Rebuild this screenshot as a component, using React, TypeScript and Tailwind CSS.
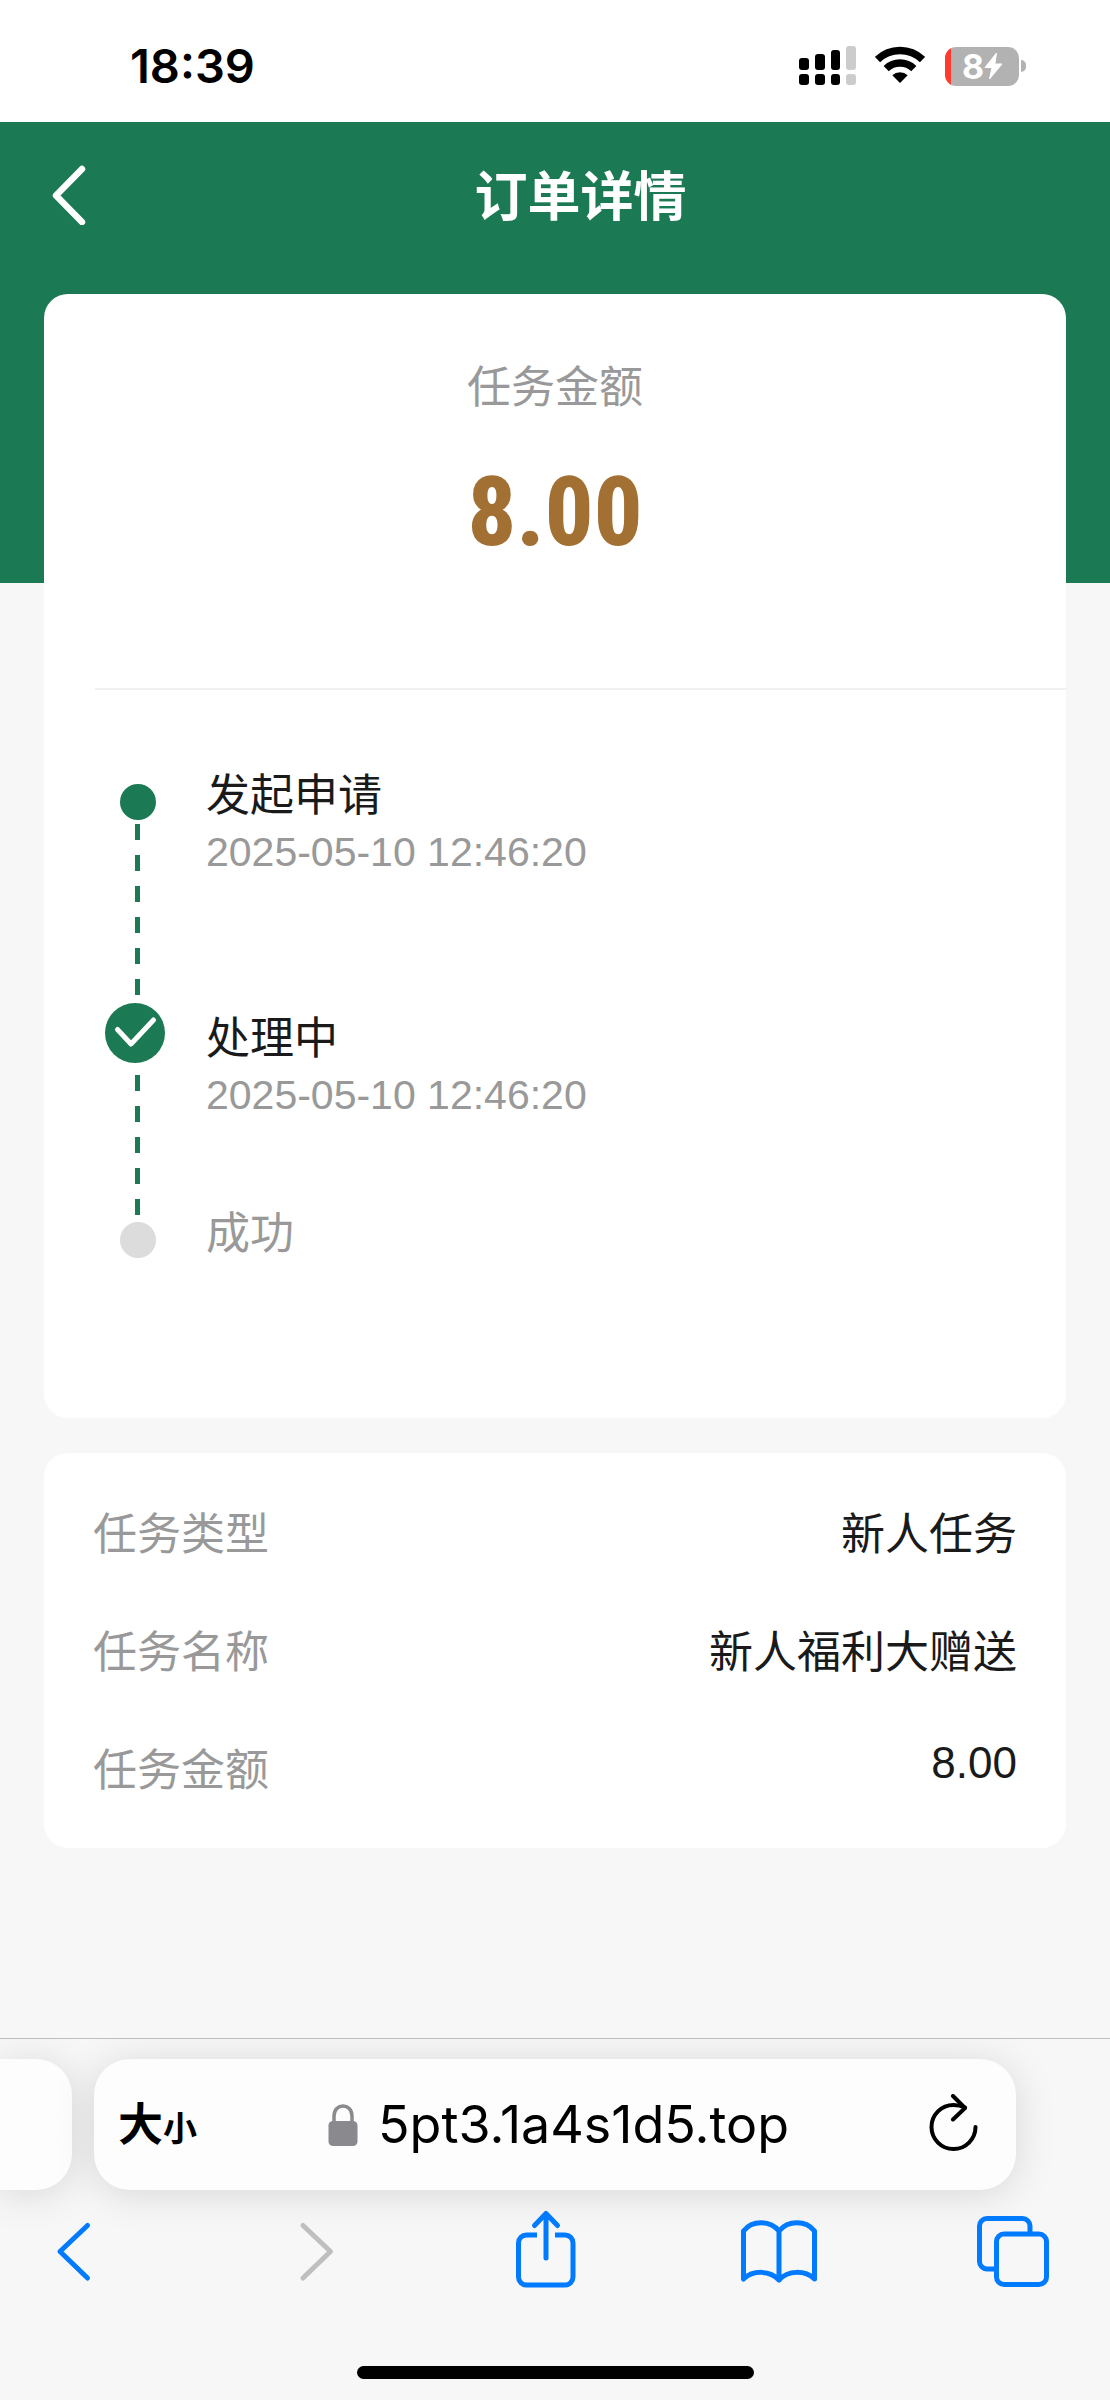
import type { ReactNode } from "react";

const steps = [
  { title: "发起申请", time: "2025-05-10 12:46:20", box: "h-[243px] text-[#1a1a1a]" },
  { title: "处理中", time: "2025-05-10 12:46:20", box: "h-[195px] text-[#1a1a1a]" },
  { title: "成功", time: "", box: "text-[#999999]" },
];

const details = [
  { label: "任务类型", value: "新人任务", leading: "leading-[60px]" },
  { label: "任务名称", value: "新人福利大赠送", leading: "leading-[60px]" },
  { label: "任务金额", value: "8.00", leading: "leading-[44px]" },
];

function StatusBar() {
  return (
    <div className="flex h-[122px] items-center justify-between bg-white pl-[130px] pr-[84px] pt-[10px]">
      <time className="font-['Inter'] text-[47px] font-semibold leading-[56px] text-black">18:39</time>
      <div className="flex items-center">
        <svg className="h-[40px] w-[58px]" viewBox="0 0 58 40" aria-label="信号">
          <g fill="#000">
            <rect x="0" y="12" width="10" height="12" rx="3" />
            <rect x="16" y="8" width="10" height="16" rx="3" />
            <rect x="32" y="4" width="9" height="20" rx="3" />
            <rect x="0" y="28" width="10" height="11" rx="3" />
            <rect x="16" y="28" width="10" height="11" rx="3" />
            <rect x="32" y="28" width="9" height="11" rx="3" />
          </g>
          <g fill="#ccc">
            <rect x="47" y="0" width="10" height="24" rx="3" />
            <rect x="47" y="28" width="10" height="11" rx="3" />
          </g>
        </svg>
        <svg className="ml-[18px] h-[40px] w-[50px]" viewBox="0 0 50 40" aria-label="无线网络">
          <g fill="none" stroke="#000" strokeWidth="7.5">
            <path d="M2.5 13.5A32.5 32.5 0 0 1 47.5 13.5" />
            <path d="M11.2 22.6A20 20 0 0 1 38.8 22.6" />
          </g>
          <path d="M25 37L17.3 29.2A11.5 11.5 0 0 1 32.7 29.2Z" fill="#000" />
        </svg>
        <div className="ml-[20px] flex items-center gap-[2px]">
          <div className="flex h-[39px] w-[74px] items-center rounded-[11px] bg-linear-to-r from-[#ff3b30] from-[6px] to-[#b2b2b2] to-[6px] pl-[17px]">
            <span className="font-['Inter'] text-[34px] font-bold leading-[39px] text-white">8</span>
            <svg className="h-[28px] w-[19px]" viewBox="0 0 19 28" aria-label="充电中">
              <path d="M12.5 1L1 15.5H8L5.5 27L18 12H10.8Z" fill="#fff" stroke="#fff" strokeLinejoin="round" />
            </svg>
          </div>
          <span className="h-[12px] w-[5px] rounded-r-full bg-[#b2b2b2]" />
        </div>
      </div>
    </div>
  );
}

function TopBar() {
  return (
    <header className="bg-[#1b7953] pb-[315px] text-white">
      <div className="flex h-[146px] items-center pl-[51px]">
        <button type="button" aria-label="返回" className="w-[36px]">
          <svg className="h-[60px] w-[36px]" viewBox="0 0 36 60" fill="none" stroke="currentColor" strokeWidth="6.5" strokeLinecap="round" strokeLinejoin="round">
            <path d="M31 4L5 30.500L31 57" />
          </svg>
        </button>
        <h1 className="flex-1 pr-[36px] pt-[6px] text-center text-[53px] font-bold leading-[64px]">订单详情</h1>
      </div>
    </header>
  );
}

function Rail() {
  const dashes =
    "ml-[30px] w-[5px] self-start bg-[repeating-linear-gradient(to_bottom,#1b7953_0px,#1b7953_16px,transparent_16px,transparent_31px)]";
  return (
    <div className="flex w-[66px] flex-col items-center pt-[25px]" aria-hidden="true">
      <span className="size-[36px] rounded-full bg-[#1b7953]" />
      <span className={`mt-[4px] h-[171px] ${dashes}`} />
      <svg className="mt-[8px] size-[60px] self-start" viewBox="0 0 60 60">
        <circle cx="30" cy="30" r="30" fill="#1b7953" />
        <path d="M12.500 26.500L26 41L48.500 17" fill="none" stroke="#fff" strokeWidth="5" strokeLinecap="round" strokeLinejoin="round" />
      </svg>
      <span className={`mt-[12px] h-[140px] ${dashes}`} />
      <span className="mt-[7px] size-[36px] rounded-full bg-[#dcdcdc]" />
    </div>
  );
}

function OrderCard() {
  return (
    <section className="rounded-[24px] bg-white pb-[156px] pt-[64px]">
      <p className="text-center text-[44px] leading-[60px] text-[#999999]">任务金额</p>
      <p className="mt-[44px] text-center font-['Liberation_Sans_Narrow','Roboto_Condensed','Open_Sans_Condensed','Roboto',sans-serif] text-[96px] font-extrabold leading-[100px] text-[#a37033]">
        8.00
      </p>
      <hr className="ml-[51px] mt-[126px] border-0 border-t-2 border-[#f0f0f0]" />
      <div className="mt-[69px] flex pl-[61px]">
        <Rail />
        <ol className="ml-[35px] flex-1">
          {steps.map((step) => (
            <li key={step.title} className={`pt-[9px] ${step.box}`}>
              <p className="text-[44px] leading-[56px]">{step.title}</p>
              {step.time && <p className="mt-[4px] text-[41px] leading-[48px] text-[#999999]">{step.time}</p>}
            </li>
          ))}
        </ol>
      </div>
    </section>
  );
}

function DetailCard() {
  return (
    <dl className="mt-[35px] rounded-[24px] bg-white px-[49px] pb-[19px] pt-[22px]">
      {details.map((row) => (
        <div key={row.label} className="flex h-[118px] items-start justify-between pt-[30px] text-[44px]">
          <dt className="leading-[60px] text-[#999999]">{row.label}</dt>
          <dd className={`text-[#1a1a1a] ${row.leading}`}>{row.value}</dd>
        </div>
      ))}
    </dl>
  );
}

function NavButton({ label, disabled, children }: { label: string; disabled?: boolean; children: ReactNode }) {
  return (
    <button type="button" aria-label={label} disabled={disabled} className="text-[#007aff] disabled:text-[#bfbfbf]">
      <svg className="h-[88px] w-[80px]" viewBox="0 0 80 88" fill="none" stroke="currentColor" strokeWidth="5" strokeLinecap="round" strokeLinejoin="round">
        {children}
      </svg>
    </button>
  );
}

function BrowserBar() {
  return (
    <footer className="overflow-hidden border-t border-[#bdbdbd] bg-[#f7f7f7] pb-[21px] pt-[20px]">
      <div className="flex gap-[22px] pr-[94px]">
        <div className="h-[131px] w-[72px] rounded-r-[36px] bg-[#fdfdfd] shadow-[0_4px_40px_rgba(0,0,0,0.13)]" />
        <div className="flex h-[131px] flex-1 items-center rounded-[36px] bg-[#fdfdfd] pl-[24px] pr-[36px] text-black shadow-[0_4px_40px_rgba(0,0,0,0.13)]">
          <button type="button" aria-label="大小" className="flex items-baseline pt-[6px] font-bold">
            <span className="text-[45px] leading-[60px]">大</span>
            <span className="text-[34px] leading-[60px]">小</span>
          </button>
          <button type="button" className="flex flex-1 items-center justify-center gap-[20px] pr-[8px] font-['Inter'] text-[52px] leading-[64px]">
            <svg className="h-[42px] w-[30px]" viewBox="0 0 30 42" aria-hidden="true">
              <rect x="0.500" y="17" width="29" height="25" rx="4.500" fill="#8a8a8e" />
              <path d="M6 19V12C6 -1.500 24 -1.500 24 12V19" fill="none" stroke="#8a8a8e" strokeWidth="3.500" />
            </svg>
            5pt3.1a4s1d5.top
          </button>
          <button type="button" aria-label="重新载入">
            <svg className="h-[62px] w-[52px]" viewBox="0 0 52 62" fill="none" stroke="currentColor" strokeWidth="4" strokeLinecap="round" strokeLinejoin="round">
              <path d="M47.500 33A22 22 0 1 1 25.500 11Q31.500 11 37 13.500" />
              <path d="M25 2L37 14L25 25.500" />
            </svg>
          </button>
        </div>
      </div>
      <nav className="mt-[17px] flex justify-between pl-[34px] pr-[57px]">
        <NavButton label="后退">
          <path d="M53.500 18.500L26 44.500L53.500 71" />
        </NavButton>
        <NavButton label="前进" disabled>
          <path d="M34 18.500L61.500 44.500L34 71" />
        </NavButton>
        <NavButton label="分享">
          <path d="M33 28H22.500a8 8 0 0 0-8 8V70a8 8 0 0 0 8 8H61a8 8 0 0 0 8-8V36a8 8 0 0 0-8-8H51" strokeLinecap="butt" />
          <path d="M42 51V7M30.500 18.500L42 6.500L53.500 18.500" />
        </NavButton>
        <NavButton label="书签">
          <path d="M5.500 72V24C14 13 32 13 41 24C50 13 68 13 76.500 24V72C67 63 50 63 41 73C32 63 15 63 5.500 72ZM41 24V73" />
        </NavButton>
        <NavButton label="标签页">
          <path d="M57 26V19a7.500 7.500 0 0 0-7.500-7.500H14A7.500 7.500 0 0 0 6.500 19V54.500a7.500 7.500 0 0 0 7.500 7.500H23" strokeLinecap="butt" />
          <rect x="23.500" y="27" width="50" height="50.500" rx="7.500" />
        </NavButton>
      </nav>
      <div className="mx-auto mt-[71px] h-[13px] w-[397px] rounded-full bg-black" />
    </footer>
  );
}

export default function App() {
  return (
    <div className="flex min-h-screen flex-col bg-[#f7f7f7] font-['Liberation_Sans','Noto_Sans_CJK_SC',sans-serif]">
      <StatusBar />
      <TopBar />
      <main className="-mt-[289px] flex-1 px-[44px]">
        <OrderCard />
        <DetailCard />
      </main>
      <BrowserBar />
    </div>
  );
}
